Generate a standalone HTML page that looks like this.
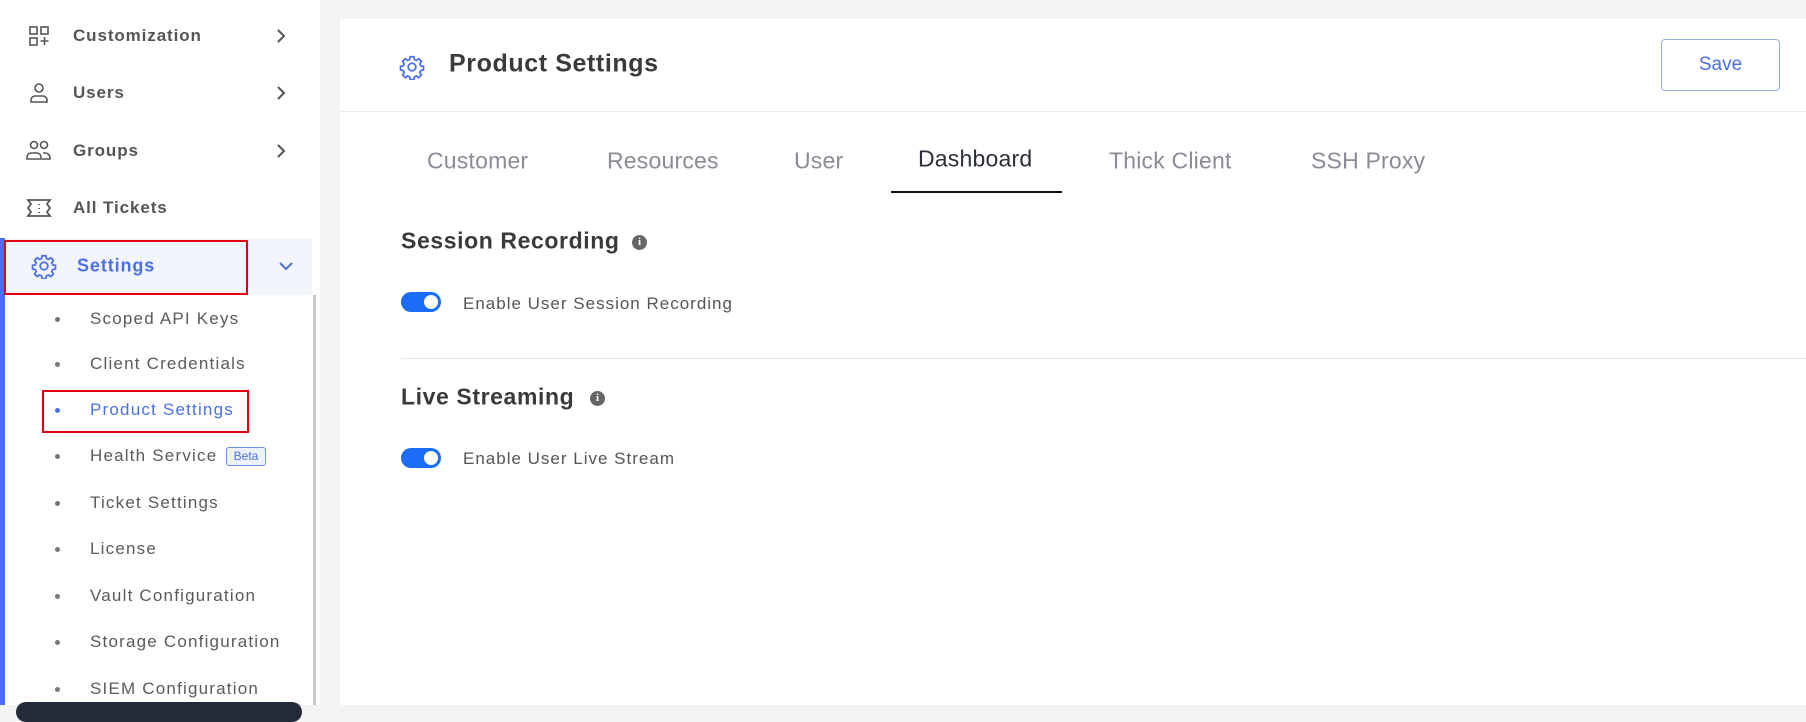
<!DOCTYPE html>
<html><head><meta charset="utf-8"><style>
*{margin:0;padding:0;box-sizing:border-box}
body{width:1806px;height:705px;overflow:hidden;background:#f3f3f3;font-family:"Liberation Sans",sans-serif;position:relative}
.a{position:absolute;white-space:nowrap}
.side{position:absolute;left:0;top:0;width:320px;height:705px;background:#fff}
.nav{font-size:17px;font-weight:bold;color:#555;transform:translateY(-50%);letter-spacing:0.9px}
.sub{font-size:17px;color:#5a5a5a;transform:translateY(-50%);letter-spacing:1.2px}
.dot{width:5px;height:5px;border-radius:50%;background:#777}
.chev{transform:translateY(-50%)}
.card{position:absolute;left:340px;top:19px;width:1466px;height:686px;background:#fff}
.tab{font-size:23px;color:#8a8b96;transform:translateY(-50%);letter-spacing:0.2px}
.h{font-size:23px;font-weight:bold;color:#3a3a3a;transform:translateY(-50%);letter-spacing:0.6px}
.lbl{font-size:17px;color:#555;transform:translateY(-50%);letter-spacing:1px}
.tg{width:40px;height:20px;border-radius:10px;background:#1a6df5}
.tg::after{content:"";position:absolute;right:3px;top:3px;width:14px;height:14px;border-radius:50%;background:#fff}
.info{width:15px;height:15px;border-radius:50%;background:#666;color:#fff;font-size:11px;font-weight:bold;text-align:center;line-height:15px;font-family:"Liberation Serif",serif}
</style></head><body>
<div class="side"></div>
<svg class="a" style="left:27px;top:24px" width="24" height="24" viewBox="0 0 24 24" fill="none" stroke="#555" stroke-width="1.6"><rect x="3" y="3" width="7" height="7"/><rect x="14" y="3" width="7" height="7"/><rect x="3" y="14" width="7" height="7"/><path d="M17.5 13v8M13.5 17h8"/></svg>
<div class="a nav" style="left:73px;top:36px">Customization</div>
<svg class="a chev" style="left:275px;top:36px" width="12" height="16" viewBox="0 0 12 16" fill="none" stroke="#555" stroke-width="2"><path d="M3 2l6 6-6 6"/></svg>

<svg class="a" style="left:27px;top:81px" width="24" height="24" viewBox="0 0 24 24" fill="none" stroke="#555" stroke-width="1.6"><circle cx="12" cy="7" r="4"/><path d="M4 21v-2a4 4 0 0 1 4-4h8a4 4 0 0 1 4 4v2z"/></svg>
<div class="a nav" style="left:73px;top:93px">Users</div>
<svg class="a chev" style="left:275px;top:93px" width="12" height="16" viewBox="0 0 12 16" fill="none" stroke="#555" stroke-width="2"><path d="M3 2l6 6-6 6"/></svg>

<svg class="a" style="left:25px;top:139px" width="28" height="24" viewBox="0 0 28 24" fill="none" stroke="#555" stroke-width="1.6"><circle cx="9" cy="6" r="3.5"/><circle cx="19" cy="6" r="3.5"/><path d="M2 20v-2a4 4 0 0 1 4-4h6a4 4 0 0 1 4 4v2z"/><path d="M18 14h2a5 5 0 0 1 5 5v1h-8"/></svg>
<div class="a nav" style="left:73px;top:151px">Groups</div>
<svg class="a chev" style="left:275px;top:151px" width="12" height="16" viewBox="0 0 12 16" fill="none" stroke="#555" stroke-width="2"><path d="M3 2l6 6-6 6"/></svg>

<svg class="a" style="left:25px;top:197px" width="28" height="22" viewBox="0 0 28 22" fill="none" stroke="#555" stroke-width="1.8"><path d="M3 3h22l-3 4 3 4-3 4 3 4H3l3-4-3-4 3-4z"/><path d="M14 7v1M14 11v1M14 15v1"/></svg>
<div class="a nav" style="left:73px;top:208px">All Tickets</div>

<div class="a" style="left:0;top:238px;width:5px;height:467px;background:#4a6cf7"></div>
<div class="a" style="left:5px;top:238px;width:307px;height:57px;background:#f3f5fc"></div>
<div class="a" style="left:4px;top:240px;width:244px;height:55px;border:2px solid #e0000f"></div>
<svg class="a" style="left:31px;top:253px" width="26" height="26" viewBox="0 0 24 24" fill="none" stroke="#4a6fe8" stroke-width="1.6"><path d="M10.3 2.5h3.4l.5 2.6 1.9.8 2.2-1.5 2.4 2.4-1.5 2.2.8 1.9 2.6.5v3.4l-2.6.5-.8 1.9 1.5 2.2-2.4 2.4-2.2-1.5-1.9.8-.5 2.6h-3.4l-.5-2.6-1.9-.8-2.2 1.5-2.4-2.4 1.5-2.2-.8-1.9-2.6-.5v-3.4l2.6-.5.8-1.9-1.5-2.2 2.4-2.4 2.2 1.5 1.9-.8z"/><circle cx="12" cy="12" r="3.5"/></svg>
<div class="a nav" style="left:77px;top:266px;color:#4a6fe8;font-size:18px">Settings</div>
<svg class="a chev" style="left:278px;top:266px" width="16" height="12" viewBox="0 0 16 12" fill="none" stroke="#4a6fe8" stroke-width="2"><path d="M2 3l6 6 6-6"/></svg>

<div class="a" style="left:313px;top:295px;width:3px;height:410px;background:#c8c8c8"></div>

<div class="a dot" style="left:55px;top:317px"></div><div class="a sub" style="left:90px;top:319px">Scoped API Keys</div>
<div class="a dot" style="left:55px;top:362px"></div><div class="a sub" style="left:90px;top:364px">Client Credentials</div>
<div class="a dot" style="left:55px;top:408px;background:#4a6fe8"></div><div class="a sub" style="left:90px;top:410px;color:#4a6fe8">Product Settings</div>
<div class="a" style="left:42px;top:390px;width:207px;height:43px;border:2px solid #e0000f"></div>
<div class="a dot" style="left:55px;top:454px"></div><div class="a sub" style="left:90px;top:456px">Health Service</div>
<div class="a" style="left:226px;top:447px;width:40px;height:19px;border:1px solid #6f8ff0;border-radius:3px;background:#eef2fe;color:#4a6fe8;font-size:12px;text-align:center;line-height:17px">Beta</div>
<div class="a dot" style="left:55px;top:501px"></div><div class="a sub" style="left:90px;top:503px">Ticket Settings</div>
<div class="a dot" style="left:55px;top:547px"></div><div class="a sub" style="left:90px;top:549px">License</div>
<div class="a dot" style="left:55px;top:594px"></div><div class="a sub" style="left:90px;top:596px">Vault Configuration</div>
<div class="a dot" style="left:55px;top:640px"></div><div class="a sub" style="left:90px;top:642px">Storage Configuration</div>
<div class="a dot" style="left:55px;top:687px"></div><div class="a sub" style="left:90px;top:689px">SIEM Configuration</div>
<div class="a" style="left:16px;top:702px;width:286px;height:20px;border-radius:10px;background:#232b38"></div>

<div class="card"></div>
<svg class="a" style="left:399px;top:54px" width="26" height="26" viewBox="0 0 24 24" fill="none" stroke="#4a6fe8" stroke-width="1.6"><path d="M10.3 2.5h3.4l.5 2.6 1.9.8 2.2-1.5 2.4 2.4-1.5 2.2.8 1.9 2.6.5v3.4l-2.6.5-.8 1.9 1.5 2.2-2.4 2.4-2.2-1.5-1.9.8-.5 2.6h-3.4l-.5-2.6-1.9-.8-2.2 1.5-2.4-2.4 1.5-2.2-.8-1.9-2.6-.5v-3.4l2.6-.5.8-1.9-1.5-2.2 2.4-2.4 2.2 1.5 1.9-.8z"/><circle cx="12" cy="12" r="3.5"/></svg>
<div class="a h" style="left:449px;top:64px;font-size:25px">Product Settings</div>
<div class="a" style="left:1661px;top:39px;width:119px;height:52px;border:1px solid #8fb0d6;border-radius:4px;color:#4a6fe8;font-size:19px;text-align:center;line-height:50px">Save</div>
<div class="a" style="left:340px;top:111px;width:1466px;height:1px;background:#ebebeb"></div>

<div class="a tab" style="left:427px;top:161px">Customer</div>
<div class="a tab" style="left:607px;top:161px">Resources</div>
<div class="a tab" style="left:794px;top:161px">User</div>
<div class="a tab" style="left:918px;top:159px;color:#2a2f3a">Dashboard</div>
<div class="a tab" style="left:1109px;top:161px">Thick Client</div>
<div class="a tab" style="left:1311px;top:161px">SSH Proxy</div>
<div class="a" style="left:891px;top:191px;width:171px;height:2px;background:#111"></div>

<div class="a h" style="left:401px;top:241px">Session Recording</div>
<div class="a info" style="left:632px;top:235px">i</div>
<div class="a tg" style="left:401px;top:292px"></div>
<div class="a lbl" style="left:463px;top:304px">Enable User Session Recording</div>
<div class="a" style="left:401px;top:358px;width:1405px;height:1px;background:#e6e6e6"></div>
<div class="a h" style="left:401px;top:397px">Live Streaming</div>
<div class="a info" style="left:590px;top:391px">i</div>
<div class="a tg" style="left:401px;top:448px"></div>
<div class="a lbl" style="left:463px;top:459px">Enable User Live Stream</div>
</body></html>
